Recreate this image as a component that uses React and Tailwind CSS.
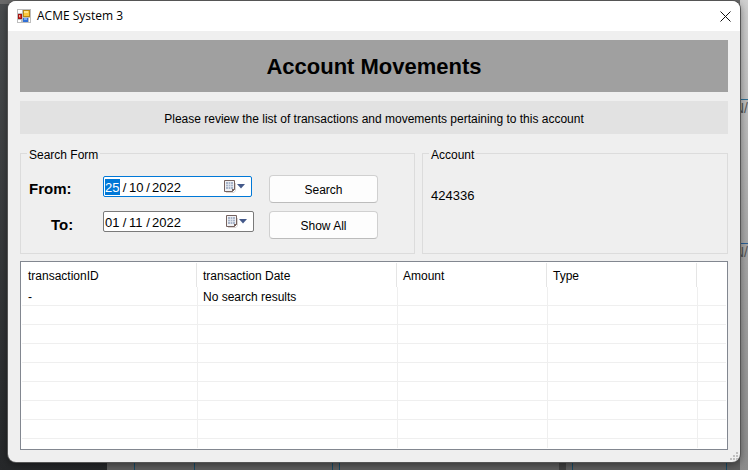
import { useState } from "react";

const columns = ["transactionID", "transaction Date", "Amount", "Type", ""];

const rows = [["-", "No search results", "", "", ""], ...Array.from({ length: 7 }, () => ["", "", "", "", ""])];

function AppIcon() {
  return (
    <svg width="14" height="14" viewBox="0 0 14 14" shapeRendering="crispEdges" aria-hidden="true">
      <rect width="14" height="14" fill="#bdbdbd" />
      <rect x="1" y="1" width="4" height="3" fill="#fff" />
      <rect x="1" y="11" width="3" height="2" fill="#fff" />
      <rect x="12" y="9" width="1" height="4" fill="#fff" />
      <rect x="1" y="5" width="4" height="5" fill="#a31212" />
      <rect x="2" y="6" width="2" height="3" fill="#d8392b" />
      <rect x="2" y="6" width="1" height="2" fill="#f3a79c" />
      <rect x="6" y="1" width="7" height="7" fill="#b98a14" />
      <rect x="7" y="2" width="5" height="5" fill="#fbc93d" />
      <rect x="7" y="2" width="4" height="2" fill="#ffe38a" />
      <rect x="6" y="9" width="5" height="4" fill="#2f6fd6" />
      <rect x="7" y="9" width="3" height="2" fill="#79aaf3" />
    </svg>
  );
}

function CalendarIcon() {
  return (
    <svg width="21" height="14" viewBox="0 0 21 14" aria-hidden="true">
      <path d="M2 12.500h8l1.500-2V3" fill="none" stroke="#d9d4d2" />
      <path d="M.5.5h10v9l-2 2h-8z" fill="#f1f2f5" stroke="#75625f" />
      <path d="M8 12V9h3z" fill="#75625f" />
      <path d="M2 2h7v7H2z" fill="#a9b5c9" />
      <path d="M2 4.500h7M2 6.500h7M4.500 2v7M6.500 2v7" stroke="#e6eaf1" strokeWidth=".7" />
      <path d="M13 4h8l-4 4.500z" fill="#44598a" />
    </svg>
  );
}

function DateField({ id, initial, active, className }) {
  const [parts, setParts] = useState(initial);
  const change = (index) => (event) =>
    setParts(parts.map((part, i) => (i === index ? event.target.value : part)));

  return (
    <div
      role="group"
      className={`flex h-[21px] items-center rounded-xs border bg-white pl-px pr-[6px] text-[13px] leading-4 ${className}`}
    >
      <input
        id={id}
        aria-label="Day"
        value={parts[0]}
        onChange={change(0)}
        className={`h-4 w-[15px] pt-0.5 outline-none ${active ? "bg-[#0078d7] text-white" : ""}`}
      />
      <span className="w-[9px] pt-0.5 text-center">/</span>
      <input
        aria-label="Month"
        value={parts[1]}
        onChange={change(1)}
        className="h-4 w-[15px] pt-0.5 outline-none"
      />
      <span className="w-[8px] pt-0.5 text-center">/</span>
      <input
        aria-label="Year"
        value={parts[2]}
        onChange={change(2)}
        className="h-4 w-[30px] pt-0.5 outline-none"
      />
      <button type="button" aria-label="Open calendar" className="ml-auto">
        <CalendarIcon />
      </button>
    </div>
  );
}

function FormButton({ children }) {
  return (
    <button
      type="button"
      className="h-7 w-[109px] rounded border border-[#d0d0d0] border-b-[#bcbcbc] bg-[#fdfdfd] pt-0.5 leading-4"
    >
      {children}
    </button>
  );
}

function Group({ title, className, children }) {
  return (
    <fieldset className={`h-[111px] border border-[#dcdcdc] px-2 ${className}`}>
      <legend className="-ml-0.5 px-0.5 pt-1 leading-4">{title}</legend>
      {children}
    </fieldset>
  );
}

function Backdrop() {
  return (
    <div aria-hidden="true" className="absolute inset-0 -z-10 overflow-hidden bg-[#5e5e5e]">
      <div className="absolute inset-y-0 left-0 w-[107px] bg-linear-to-b from-[#4a4d4f] to-[#26282a]" />
      <div className="absolute inset-x-0 top-0 h-1 bg-[#6a6a6a]" />
      <div className="absolute inset-y-0 right-0 w-2 bg-linear-to-b from-[#cfcfcf] via-[#a9a9a9] to-[#8c8c8c]" />
      <div className="absolute right-0 top-[99px] flex w-6 justify-end border-t border-[#2a6f94] text-[14px] leading-4 text-[#555]">
        N/
      </div>
      <div className="absolute right-0 top-[243px] flex w-6 justify-end border-t border-[#2a5f94] text-[14px] leading-4 text-[#555]">
        N/
      </div>
      <div className="absolute bottom-0 left-[134px] h-2 w-[61px] border-x border-[#174a66]" />
      <div className="absolute bottom-0 left-[332px] h-2 w-2 border-x border-[#174a66]" />
      <div className="absolute bottom-0 left-[559px] h-2 w-[7px] bg-[#414141]" />
      <div className="absolute bottom-0 left-[572px] h-2 w-[155px] border-x border-[#174a66]" />
    </div>
  );
}

export default function App() {
  return (
    <div className="relative isolate min-h-screen px-2 pb-2 pt-px font-['Liberation_Sans',Arial,sans-serif] text-[12px] text-black">
      <Backdrop />
      <main className="relative overflow-hidden rounded-lg bg-[#efefef] shadow-[0_0_0_1px_#555,0_2px_8px_rgba(0,0,0,0.5)]">
        <header className="flex h-[30px] items-center bg-white pl-[9px] pr-[9px]">
          <AppIcon />
          <span className="ml-1.5 font-['Open_Sans','Noto_Sans',sans-serif] leading-4">ACME System 3</span>
          <button type="button" aria-label="Close" className="ml-auto">
            <svg width="11" height="11" viewBox="0 0 11 11" aria-hidden="true">
              <path d="M.5.5l10 10M10.500.5l-10 10" stroke="#111" />
            </svg>
          </button>
        </header>

        <div className="px-3 pb-3 pt-[9px]">
          <h1 className="flex h-[52px] items-center justify-center bg-[#a0a0a0] text-[22px] font-bold">
            Account Movements
          </h1>
          <p className="mt-[9px] flex h-[33px] items-center justify-center bg-[#e2e2e2] pt-0.5 leading-4">
            Please review the list of transactions and movements pertaining to this account
          </p>

          <div className="mt-[9px] flex gap-[7px]">
            <Group title="Search Form" className="w-[395px]">
              <div className="flex items-start pt-3">
                <div className="flex w-[74px] flex-col gap-2 text-[15px] font-bold leading-7">
                  <label htmlFor="from-day">From:</label>
                  <label htmlFor="to-day" className="pl-[22px]">
                    To:
                  </label>
                </div>
                <div className="flex w-[166px] flex-col gap-[14px] pt-px">
                  <DateField
                    id="from-day"
                    initial={["25", "10", "2022"]}
                    active
                    className="w-[149px] border-[#0078d7]"
                  />
                  <DateField id="to-day" initial={["01", "11", "2022"]} className="w-[151px] border-[#7a7a7a]" />
                </div>
                <div className="flex flex-col gap-2">
                  <FormButton>Search</FormButton>
                  <FormButton>Show All</FormButton>
                </div>
              </div>
            </Group>
            <Group title="Account" className="min-w-0 flex-1">
              <p className="pt-[25px] text-[13px] leading-4">424336</p>
            </Group>
          </div>

          <div className="mt-[7px] border border-[#828790] bg-white p-px">
            <table className="w-full table-fixed border-separate border-spacing-0 text-left">
              <colgroup>
                <col className="w-[176px]" />
                <col className="w-[200px]" />
                <col className="w-[150px]" />
                <col className="w-[150px]" />
                <col />
              </colgroup>
              <thead>
                <tr>
                  {columns.map((name, i) => (
                    <th key={i} scope="col" className="group p-0 font-normal">
                      <div className="mr-px h-6 border-r border-[#e5e5e5] pl-[5px] pt-[3px] leading-5 group-first:pl-1.5 group-last:border-r-0">
                        {name}
                      </div>
                    </th>
                  ))}
                </tr>
              </thead>
              <tbody>
                {rows.map((row, r) => (
                  <tr key={r}>
                    {row.map((cell, c) => (
                      <td
                        key={c}
                        className="h-[19px] border-b border-r border-[#efefef] p-0 pl-[5px] pt-0.5 leading-4 first:pl-1.5 last:border-r-0"
                      >
                        {cell}
                      </td>
                    ))}
                  </tr>
                ))}
                <tr>
                  {columns.map((_, c) => (
                    <td key={c} className="h-[9px] border-r border-[#efefef] p-0 last:border-r-0" />
                  ))}
                </tr>
              </tbody>
            </table>
          </div>
        </div>

        <svg
          className="absolute bottom-0.5 right-0.5"
          width="8"
          height="8"
          viewBox="0 0 8 8"
          shapeRendering="crispEdges"
          aria-hidden="true"
        >
          <path d="M6 0h2v2H6zM3 3h2v2H3zM6 3h2v2H6zM0 6h2v2H0zM3 6h2v2H3zM6 6h2v2H6z" fill="#bfbfbf" />
        </svg>
      </main>
    </div>
  );
}
